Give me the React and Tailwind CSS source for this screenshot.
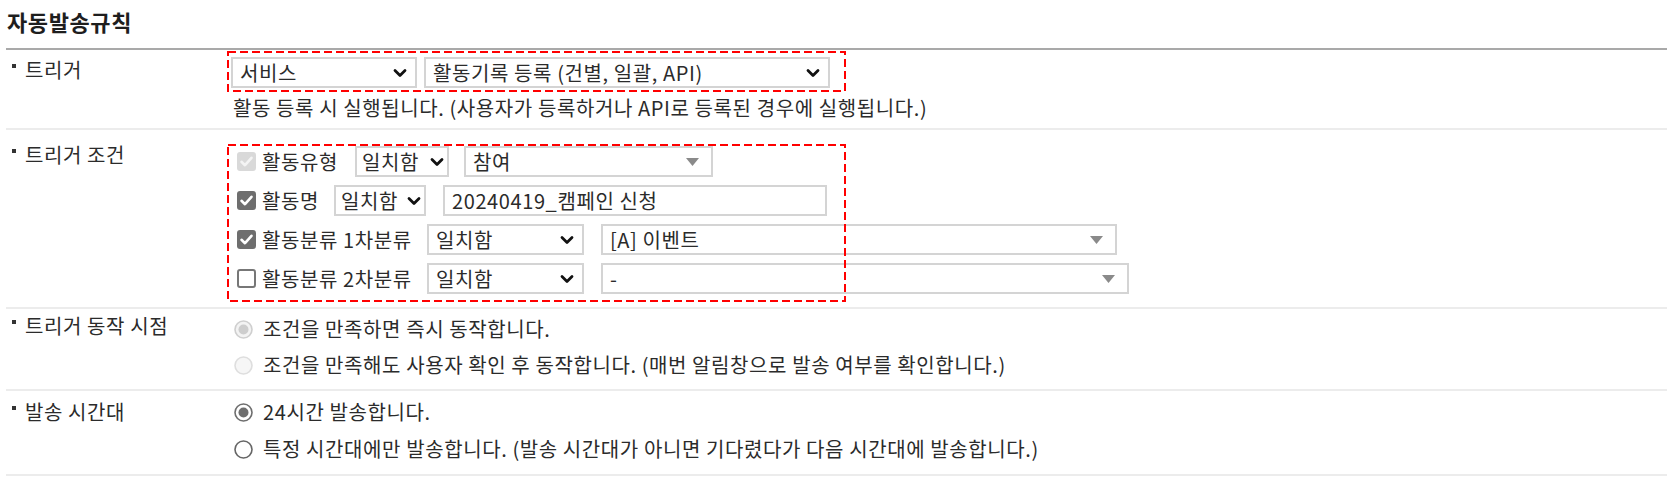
import React from "react";

const Chevron = () => (
  <svg width="14" height="10" viewBox="0 0 14 10" className="shrink-0">
    <path d="M2 2.5 L7 7.5 L12 2.5" fill="none" stroke="#111" strokeWidth="2.8" strokeLinecap="round" strokeLinejoin="round" />
  </svg>
);

const Tri = () => (
  <svg width="13" height="8" viewBox="0 0 13 8" className="shrink-0">
    <path d="M0 0 H13 L6.5 8 Z" fill="#8a8a8a" />
  </svg>
);

function NSelect({ w, text, compact }) {
  const pad = compact ? "pl-[5px] pr-[3px] gap-[3px]" : "pl-[7px] pr-[8px]";
  return (
    <div className={`${w} ${pad} shrink-0 h-[31px] border-2 border-[#d4d4d4] bg-white flex items-center justify-between`}>
      <span className="leading-[24px] whitespace-nowrap">{text}</span>
      <Chevron />
    </div>
  );
}

function S2Select({ w, text }) {
  return (
    <div className={`${w} shrink-0 h-[31px] border-2 border-[#d4d4d4] bg-white flex items-center justify-between pl-[7px] pr-[12px]`}>
      <span className="leading-[24px] whitespace-nowrap">{text}</span>
      <Tri />
    </div>
  );
}

function TextInput({ w, text }) {
  return (
    <div className={`${w} shrink-0 h-[31px] border-2 border-[#d4d4d4] bg-white flex items-center pl-[7px]`}>
      <span className="leading-[24px] whitespace-nowrap">{text}</span>
    </div>
  );
}

function Check({ variant }) {
  if (variant === "off") {
    return <div className="w-[19px] h-[19px] shrink-0 rounded-[3px] border-2 border-[#777] bg-white" />;
  }
  const bg = variant === "disabled" ? "bg-[#d9d9d9]" : "bg-[#6e6e6e]";
  const stroke = variant === "disabled" ? "#f4f4f4" : "#ffffff";
  return (
    <div className={`w-[19px] h-[19px] shrink-0 rounded-[3px] ${bg} flex items-center justify-center`}>
      <svg width="19" height="19" viewBox="0 0 19 19">
        <path d="M4.5 9.8 L8 13.2 L14.5 5.8" fill="none" stroke={stroke} strokeWidth="2.6" strokeLinecap="round" strokeLinejoin="round" />
      </svg>
    </div>
  );
}

function Radio({ variant }) {
  const map = {
    dison: { ring: "#cfcfcf", fill: "#f3f3f3", dot: "#cdcdcd" },
    disoff: { ring: "#dedede", fill: "#f6f6f6", dot: null },
    on: { ring: "#6e6e6e", fill: "#ffffff", dot: "#6e6e6e" },
    off: { ring: "#666666", fill: "#ffffff", dot: null },
  };
  const c = map[variant];
  return (
    <svg width="19" height="19" viewBox="0 0 19 19" className="shrink-0">
      <circle cx="9.5" cy="9.5" r="8.5" fill={c.fill} stroke={c.ring} strokeWidth="1.6" />
      {c.dot && <circle cx="9.5" cy="9.5" r="5" fill={c.dot} />}
    </svg>
  );
}

function DashBox({ className, children }) {
  return (
    <div className={`relative ${className}`}>
      {children}
      <svg className="absolute inset-0 w-full h-full pointer-events-none overflow-visible">
        <rect x="1" y="1" className="w-[calc(100%-2px)] h-[calc(100%-2px)]" fill="none" stroke="#ff0000" strokeWidth="2" strokeDasharray="8 4" />
      </svg>
    </div>
  );
}

function Label({ text, pt }) {
  return (
    <div className={`w-[221px] shrink-0 flex items-start pl-[6px] ${pt}`}>
      <span className="w-[4px] h-[4px] bg-[#333] mt-[6px] shrink-0" />
      <span className="ml-[9px] leading-[24px] whitespace-nowrap">{text}</span>
    </div>
  );
}

function RadioItem({ variant, text }) {
  return (
    <div className="h-[30px] flex items-center">
      <Radio variant={variant} />
      <span className="ml-[10px] leading-[24px] whitespace-nowrap">{text}</span>
    </div>
  );
}

export default function App() {
  return (
    <div className="w-[1676px] h-[490px] bg-white text-[#2b2b2b] text-[20px] tracking-[0.6px] font-['Noto_Sans_CJK_KR',sans-serif] overflow-hidden">
      <div className="h-[48px] pl-[7px] pt-[7px]">
        <h1 className="text-[22px] tracking-[0.6px] font-bold leading-[28px] text-[#1e1e1e]">자동발송규칙</h1>
      </div>
      <div className="ml-[6px] w-[1661px] border-t-2 border-[#a9a9a9]">
        {/* 트리거 */}
        <div className="flex border-b-2 border-[#ececec]">
          <Label text="트리거" pt="pt-[8px]" />
          <div className="pt-[1px] pb-[8px]">
            <DashBox className="w-[619px] pt-[6px] pb-[4px] pl-[4px]">
              <div className="flex gap-[7px]">
                <NSelect w="w-[186px]" text="서비스" />
                <NSelect w="w-[406px]" text="활동기록 등록 (건별, 일괄, API)" />
              </div>
            </DashBox>
            <div className="mt-[4px] pl-[6px] leading-[24px] whitespace-nowrap">
              활동 등록 시 실행됩니다. (사용자가 등록하거나 API로 등록된 경우에 실행됩니다.)
            </div>
          </div>
        </div>

        {/* 트리거 조건 */}
        <div className="flex border-b-2 border-[#ececec]">
          <Label text="트리거 조건" pt="pt-[13px]" />
          <div className="pt-[14px] pb-[5px]">
            <DashBox className="w-[619px] pt-[2px] pb-[8px] pl-[10px]">
              <div className="flex flex-col gap-[8px]">
                <div className="flex items-center w-max">
                  <Check variant="disabled" />
                  <span className="ml-[6px] leading-[24px] whitespace-nowrap">활동유형</span>
                  <div className="ml-[17px]"><NSelect compact w="w-[94px]" text="일치함" /></div>
                  <div className="ml-[15px]"><S2Select w="w-[249px]" text="참여" /></div>
                </div>
                <div className="flex items-center w-max">
                  <Check variant="on" />
                  <span className="ml-[6px] leading-[24px] whitespace-nowrap">활동명</span>
                  <div className="ml-[15px]"><NSelect compact w="w-[92px]" text="일치함" /></div>
                  <div className="ml-[17px]"><TextInput w="w-[384px]" text="20240419_캠페인 신청" /></div>
                </div>
                <div className="flex items-center w-max">
                  <Check variant="on" />
                  <span className="ml-[6px] w-[165px] leading-[24px] whitespace-nowrap">활동분류 1차분류</span>
                  <NSelect w="w-[157px]" text="일치함" />
                  <div className="ml-[17px]"><S2Select w="w-[516px]" text="[A] 이벤트" /></div>
                </div>
                <div className="flex items-center w-max">
                  <Check variant="off" />
                  <span className="ml-[6px] w-[165px] leading-[24px] whitespace-nowrap">활동분류 2차분류</span>
                  <NSelect w="w-[157px]" text="일치함" />
                  <div className="ml-[17px]"><S2Select w="w-[528px]" text="-" /></div>
                </div>
              </div>
            </DashBox>
          </div>
        </div>

        {/* 트리거 동작 시점 */}
        <div className="flex border-b-2 border-[#ececec]">
          <Label text="트리거 동작 시점" pt="pt-[5px]" />
          <div className="pt-[5px] pb-[9px] pl-[7px] flex flex-col gap-[6px]">
            <RadioItem variant="dison" text="조건을 만족하면 즉시 동작합니다." />
            <RadioItem variant="disoff" text="조건을 만족해도 사용자 확인 후 동작합니다. (매번 알림창으로 발송 여부를 확인합니다.)" />
          </div>
        </div>

        {/* 발송 시간대 */}
        <div className="flex border-b-2 border-[#ececec]">
          <Label text="발송 시간대" pt="pt-[9px]" />
          <div className="pt-[6px] pb-[10px] pl-[7px] flex flex-col gap-[7px]">
            <RadioItem variant="on" text="24시간 발송합니다." />
            <RadioItem variant="off" text="특정 시간대에만 발송합니다. (발송 시간대가 아니면 기다렸다가 다음 시간대에 발송합니다.)" />
          </div>
        </div>
      </div>
    </div>
  );
}
